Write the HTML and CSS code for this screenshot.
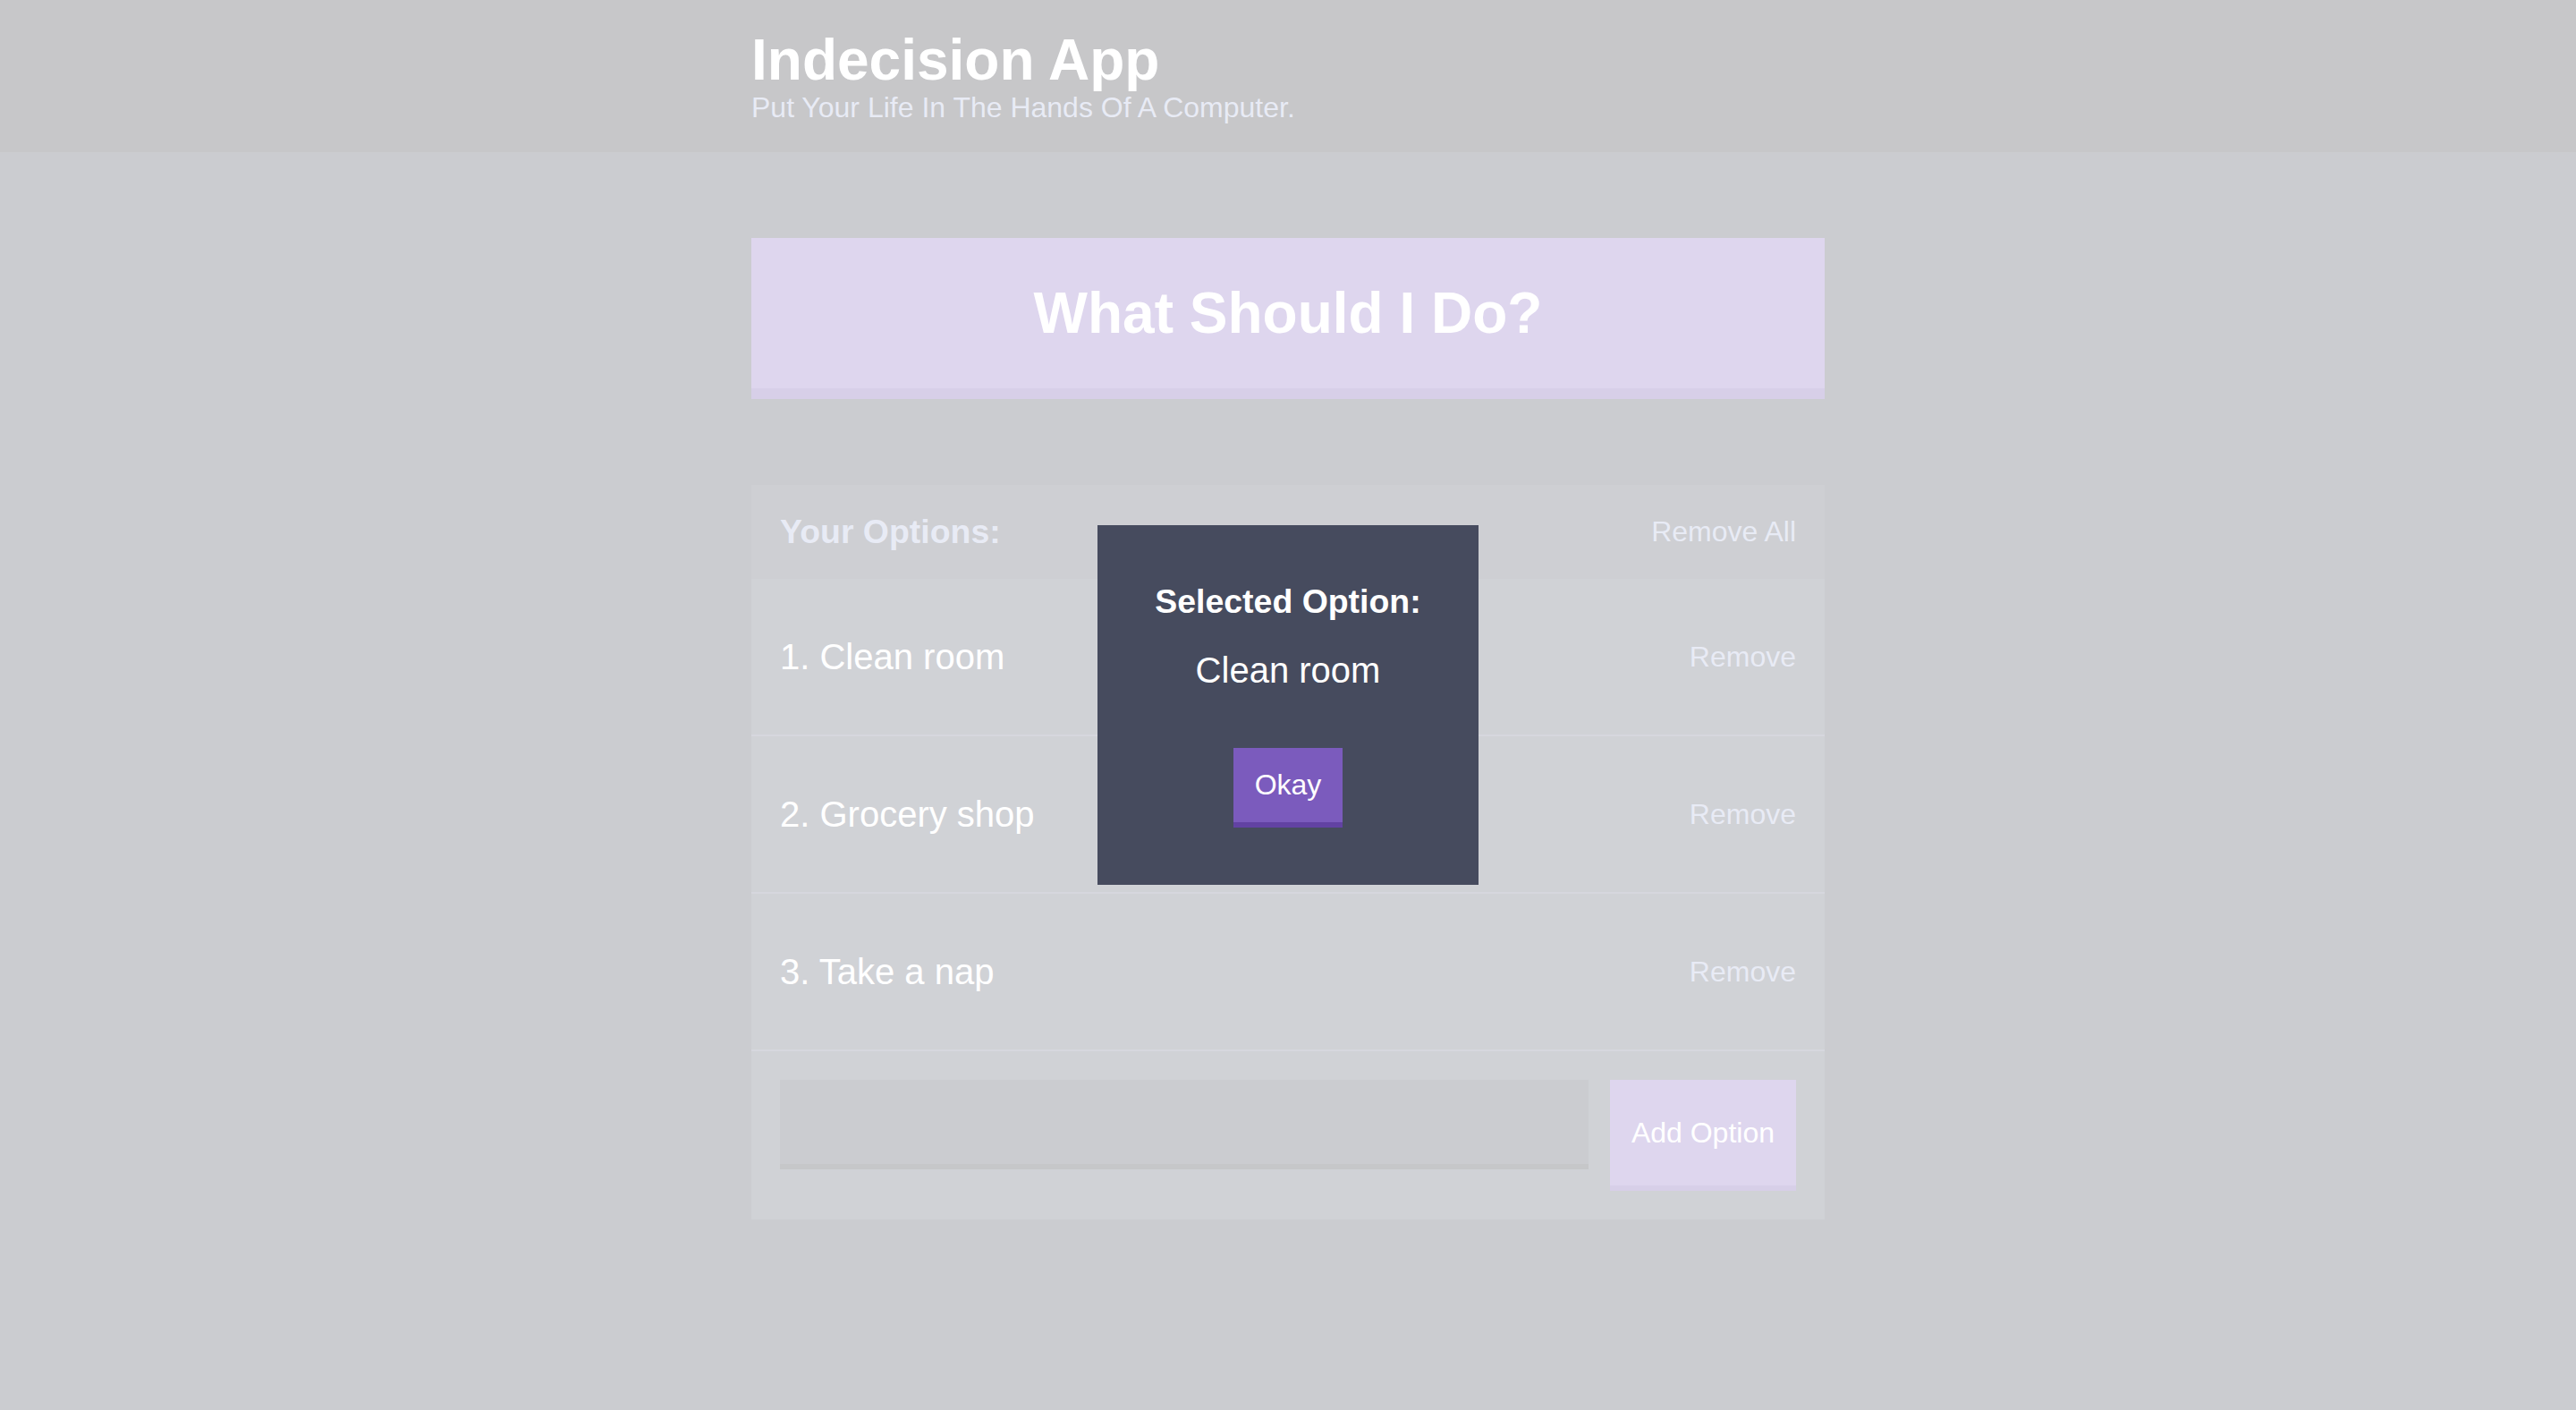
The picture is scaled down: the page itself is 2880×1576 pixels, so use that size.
FILE: index.html
```html
<!DOCTYPE html>
<html lang="en">
<head>
<meta charset="utf-8">
<title>Indecision App</title>
<link rel="stylesheet" href="styles.css">
</head>
<body>
  <header class="header">
    <div class="container">
      <h1 class="header__title">Indecision App</h1>
      <h2 class="header__subtitle">Put Your Life In The Hands Of A Computer.</h2>
    </div>
  </header>
  <main class="container">
    <button class="big-button">What Should I Do?</button>
    <section class="widget">
      <div class="widget-header">
        <h3 class="widget-header__title">Your Options:</h3>
        <button class="button--link">Remove All</button>
      </div>
      <div class="option">
        <p class="option__text">1. Clean room</p>
        <button class="button--link">Remove</button>
      </div>
      <div class="option">
        <p class="option__text">2. Grocery shop</p>
        <button class="button--link">Remove</button>
      </div>
      <div class="option">
        <p class="option__text">3. Take a nap</p>
        <button class="button--link">Remove</button>
      </div>
      <form class="add-option">
        <input class="add-option__input" type="text" name="option">
        <button class="button button--add" type="button">Add Option</button>
      </form>
    </section>
  </main>

  <div class="overlay">
    <div class="modal">
      <h3 class="modal__title">Selected Option:</h3>
      <p class="modal__body">Clean room</p>
      <div class="modal__actions">
        <button class="button button--okay">Okay</button>
      </div>
    </div>
  </div>
</body>
</html>
```

FILE: styles.css
```css
* {
  box-sizing: border-box;
}

html,
body {
  margin: 0;
  padding: 0;
}

body {
  background: #333745;
  color: #ffffff;
  font-family: "Liberation Sans", Arial, Helvetica, sans-serif;
  font-size: 32px;
  min-height: 1576px;
}

button,
input {
  font-family: "Liberation Sans", Arial, Helvetica, sans-serif;
  cursor: pointer;
}

.container {
  width: 1200px;
  margin: 0 auto;
}

/* Header */
.header {
  background: #20222b;
  padding: 32px 0;
  margin-bottom: 96px;
}

.header__title {
  margin: 0;
  font-size: 64px;
  font-weight: bold;
  line-height: 70px;
}

.header__subtitle {
  margin: 0;
  color: #a5afd7;
  font-size: 32px;
  font-weight: normal;
  line-height: 36px;
}

/* Big button */
.big-button {
  display: block;
  width: 100%;
  margin: 0 0 96px;
  padding: 48px;
  background: #7b5bbd;
  border: none;
  border-bottom: 12px solid #6242a3;
  color: #ffffff;
  font-size: 64px;
  font-weight: bold;
  line-height: 72px;
}

/* Widget */
.widget {
  background: #464b5e;
  margin-bottom: 96px;
}

.widget-header {
  display: flex;
  justify-content: space-between;
  align-items: center;
  padding: 31px 32px;
  background: #3c4251;
  color: #a5afd7;
}

.widget-header__title {
  margin: 0;
  font-size: 37.44px;
  font-weight: bold;
  line-height: 43px;
}

.button--link {
  background: none;
  border: none;
  padding: 0;
  color: #a5afd7;
  font-size: 32px;
  line-height: 37px;
}

/* Option */
.option {
  display: flex;
  justify-content: space-between;
  align-items: center;
  padding: 64px 32px;
  border-bottom: 2px solid #5c627b;
}

.option__text {
  margin: 0;
  color: #ffffff;
  font-size: 40px;
  line-height: 46px;
}

/* Add option */
.add-option {
  display: flex;
  align-items: flex-start;
  padding: 32px;
  margin: 0;
}

.add-option__input {
  flex-grow: 1;
  height: 100px;
  margin: 0 24px 0 0;
  padding: 24px;
  background: #333745;
  border: none;
  border-bottom: 6px solid #1d2028;
  color: #a5afd7;
  font-size: 32px;
  outline: none;
}

/* Buttons */
.button {
  background: #7b5bbd;
  border: none;
  border-bottom: 6px solid #6242a3;
  color: #ffffff;
  font-size: 32px;
  font-weight: normal;
  padding: 24px;
}

.button--add {
  line-height: 70px;
}

.button--okay {
  line-height: 35px;
}

/* Modal overlay */
.overlay {
  position: fixed;
  top: 0;
  right: 0;
  bottom: 0;
  left: 0;
  display: flex;
  align-items: center;
  justify-content: center;
  background: rgba(255, 255, 255, 0.75);
}

.modal {
  max-width: 600px;
  padding: 64px;
  background: #464b5e;
  color: #ffffff;
  text-align: center;
}

.modal__title {
  margin: 0 0 32px;
  font-size: 37.44px;
  font-weight: bold;
  line-height: 43px;
}

.modal__body {
  margin: 0 0 64px;
  font-size: 40px;
  font-weight: 300;
  line-height: 46px;
}

.modal__actions {
  display: flex;
  justify-content: center;
}
```
